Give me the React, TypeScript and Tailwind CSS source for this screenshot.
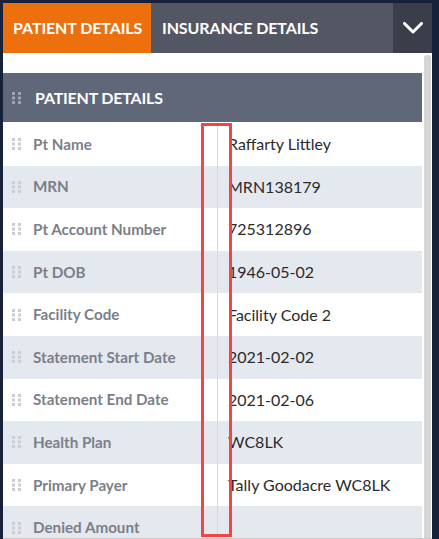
import React from "react";

const rows: [string, string][] = [
  ["Pt Name", "Raffarty Littley"],
  ["MRN", "MRN138179"],
  ["Pt Account Number", "725312896"],
  ["Pt DOB", "1946-05-02"],
  ["Facility Code", "Facility Code 2"],
  ["Statement Start Date", "2021-02-02"],
  ["Statement End Date", "2021-02-06"],
  ["Health Plan", "WC8LK"],
  ["Primary Payer", "Tally Goodacre WC8LK"],
  ["Denied Amount", ""],
];

function Dots({ color }: { color: string }) {
  return (
    <svg width="9" height="12" viewBox="0 0 9 12" className="shrink-0">
      {[0, 4.5, 9].map((y) =>
        [0, 6].map((x) => (
          <rect key={`${x}-${y}`} x={x} y={y} width="3" height="3" fill={color} />
        ))
      )}
    </svg>
  );
}

export default function App() {
  return (
    <div
      className="w-[439px] h-[539px] overflow-hidden bg-[#17223a] pl-[3px] pt-[3px] pr-[7px] flex flex-col"
      style={{ fontFamily: '"Source Sans Pro", Lato, "Liberation Sans", sans-serif' }}
    >
      {/* tab bar */}
      <div className="h-[50px] flex shrink-0">
        <div className="w-[148px] bg-[#ed700e] flex items-center pl-[10px] text-white font-bold text-[16px] tracking-[-0.1px]">
          PATIENT DETAILS
        </div>
        <div className="w-[242px] bg-[#535663] flex items-center pl-[11px] text-white font-bold text-[16px] tracking-[-0.1px]">
          INSURANCE DETAILS
        </div>
        <div className="flex-1 bg-[#3a3e4b] flex items-center justify-center">
          <svg width="20" height="12" viewBox="0 0 20 12">
            <polyline points="1.5,1.5 10,10 18.5,1.5" fill="none" stroke="white" strokeWidth="3" strokeLinecap="round" strokeLinejoin="round" />
          </svg>
        </div>
      </div>
      {/* body */}
      <div className="flex-1 bg-white border-b border-[#c9c9c9] flex overflow-hidden">
        <div className="w-[419px] pt-[20px] flex flex-col">
          <div className="h-[49px] bg-[#606778] flex items-center gap-[14px] pl-[9px] shrink-0">
            <Dots color="#a0a5b1" />
            <span className="text-white font-bold text-[16px] tracking-[-0.2px]">PATIENT DETAILS</span>
          </div>
          <div className="relative mt-[1px] flex-1 overflow-hidden">
            {rows.map(([label, value], i) => (
              <div
                key={label}
                className={`h-[42.6px] flex items-stretch ${i % 2 === 0 ? "bg-white" : "bg-[#e4e8ef]"}`}
              >
                <div className="w-[214px] flex items-center gap-[12px] pl-[9px]">
                  <Dots color="#cbced4" />
                  <span className="text-[#7b7f89] font-bold text-[15.2px]">{label}</span>
                </div>
                <div className="w-px bg-[#d6d8dc]" />
                <div className="flex-1 flex items-center pl-[10px] text-[#2b2b2b] text-[16px]">
                  {value}
                </div>
              </div>
            ))}
            <div className="absolute left-[198px] top-0 w-[31px] h-[414px] border-[3px] border-[#f24545]" />
          </div>
        </div>
        <div className="ml-[2px] mt-[2px] w-[7px] bg-[#d6d6d6] rounded-t-[3px]" />
      </div>
    </div>
  );
}
